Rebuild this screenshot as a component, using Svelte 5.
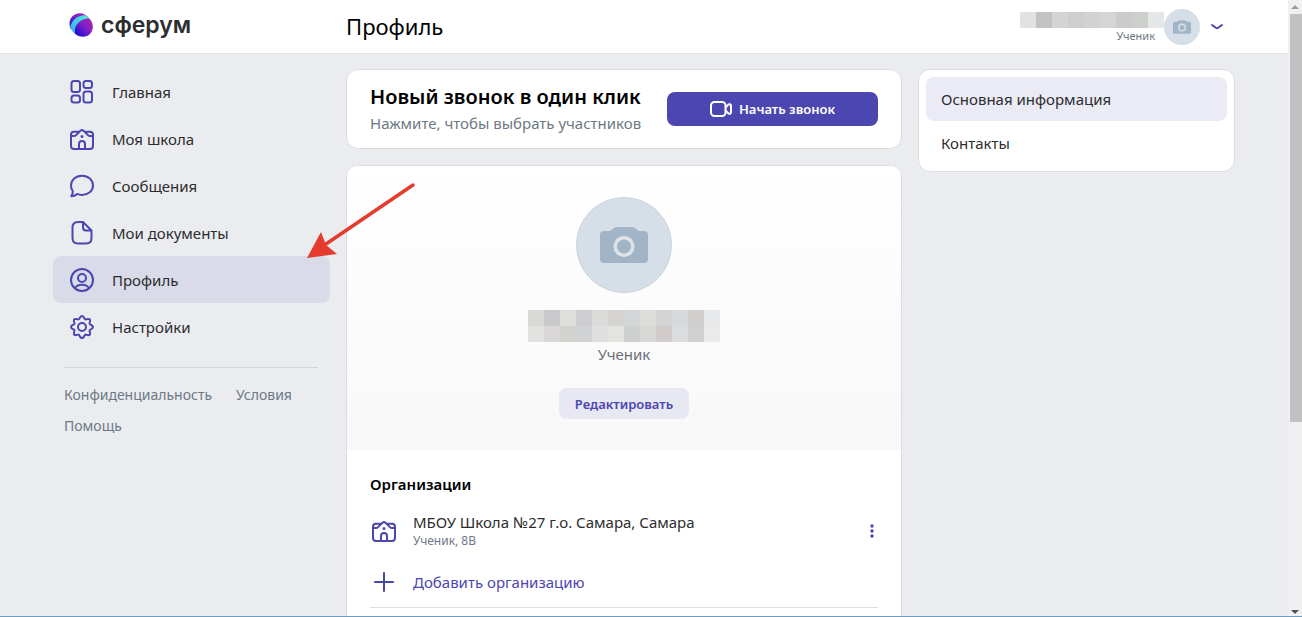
<script lang="ts">
	type IconName = 'home' | 'school' | 'messages' | 'documents' | 'profile' | 'settings';

	interface NavItem {
		icon: IconName;
		label: string;
	}

	const navItems: NavItem[] = [
		{ icon: 'home', label: 'Главная' },
		{ icon: 'school', label: 'Моя школа' },
		{ icon: 'messages', label: 'Сообщения' },
		{ icon: 'documents', label: 'Мои документы' },
		{ icon: 'profile', label: 'Профиль' },
		{ icon: 'settings', label: 'Настройки' }
	];

	const sections = ['Основная информация', 'Контакты'];

	// Hidden names, one colour per 16px tile
	const headerTiles = [
		'#e2e2e2', '#c1c4c2', '#d4d4d4', '#cecdd0', '#d2d2d1', '#d5d5d5', '#cbcbcb', '#cdcfcb', '#e3e7e7'
	];
	const nameTiles = [
		'#d9dad5', '#c9c8cb', '#dededc', '#ceced1', '#dbdbd9', '#d5d4d2',
		'#d3d5d7', '#dcdcda', '#d4d4d4', '#d8d9dc', '#d0cfcd', '#e8e9eb',
		'#e2e2e0', '#d9d7d8', '#d3d3d0', '#d2d3d5', '#dfdfdf', '#e3e3e0',
		'#ced0cf', '#d8d8d6', '#d1cccb', '#dbdcde', '#d1d1d1', '#ebebeb'
	];

	let activeNav = $state('Профиль');
	let activeSection = $state('Основная информация');
</script>

{#snippet icon(name: IconName)}
	<svg class="icon" viewBox="0 0 24 24" aria-hidden="true">
		{#if name === 'home'}
			<rect x="1.5" y="1" width="8.5" height="11" rx="2.5" />
			<rect x="13.5" y="1" width="8.5" height="7" rx="2.5" />
			<rect x="1.5" y="15.5" width="8.5" height="7" rx="2.5" />
			<rect x="13.5" y="11.5" width="8.5" height="11" rx="2.5" />
		{:else if name === 'school'}
			<path
				d="M7.800 4.800H4Q1 4.800 1 7.800V19Q1 22 4 22h16q3 0 3-3V7.800q0-3-3-3h-3.800M1 9h2.800q1.400 0 2.300-.9l4.300-4.300q1.600-1.400 3.200 0l4.300 4.300q.9.9 2.300.9H23M9 21.500V17a3 3 0 0 1 6 0v4.500"
			/>
			<circle class="dot" cx="12" cy="9.500" r="1.500" />
		{:else if name === 'messages'}
			<path
				d="M1.300 22.200c1.100-1.600 1.700-3.200 1.500-5C1.400 15.500 1 13.700 1 11.600 1 6 5.800 1.800 12 1.800S23 6 23 11.600s-4.800 9.300-11 9.300c-1.800 0-3.400-.3-4.800-1-1.700 1.500-3.700 2.300-5.900 2.300z"
			/>
		{:else if name === 'documents'}
			<path d="M13 1H8Q2.500 1 2.500 6.500V17q0 5.500 5.500 5.500h8q5.500 0 5.500-5.500V9.500zv5.500q0 3 3 3h5.500" />
		{:else if name === 'profile'}
			<circle cx="12" cy="12" r="11" />
			<circle cx="12" cy="10" r="4" />
			<path d="M5 20c1.500-2.500 4-3.300 7-3.300s5.500.8 7 3.300" />
		{:else}
			<path
				d="M10 2.500Q12-.5 14 2.500l.8 1.400q.5.800 1.400.5l1.500-.4q2.800-.5 2.300 2.300l-.4 1.500q-.3 1 .5 1.500l1.400.8q3 2 0 3.900l-1.400.8q-.8.500-.5 1.500l.4 1.500q.5 2.800-2.300 2.300l-1.500-.4q-1-.3-1.400.5L14 21.600q-2 3-4 0l-.8-1.500q-.5-.8-1.400-.5l-1.500.4Q3.500 20.500 4 17.700l.4-1.500q.3-1-.5-1.500L2.500 14q-3-2 0-3.900l1.400-.8q.8-.5.5-1.500L4 6.300Q3.500 3.500 6.300 4l1.500.4q1 .3 1.400-.5z"
			/>
			<circle cx="12" cy="12" r="4" />
		{/if}
	</svg>
{/snippet}

{#snippet camera()}
	<svg class="camera" viewBox="0 0 96 96" aria-hidden="true">
		<circle cx="48" cy="48" r="47.500" fill="#d6dfe7" stroke="#c8d3db" />
		<path
			d="M28 34h6l4-3q1.500-1 4-1h13q2.500 0 4 1l4 3h5q4 0 4 4v24q0 4-4 4H28q-4 0-4-4V38q0-4 4-4z"
			fill="#a2b5c6"
		/>
		<circle cx="48" cy="49.500" r="8.800" fill="none" stroke="#dce4ea" stroke-width="3.500" />
	</svg>
{/snippet}

<div class="window">
	<div class="page">
		<header>
			<div class="container header-row">
				<a class="logo" href="#home">
					<svg viewBox="0 0 24 24" aria-hidden="true">
						<defs>
							<linearGradient id="ball" x1="0.200" y1="0.900" x2="0.900" y2="0.200">
								<stop offset="0" stop-color="#2610d0" />
								<stop offset="0.600" stop-color="#8420c8" />
								<stop offset="1" stop-color="#a022b8" />
							</linearGradient>
							<linearGradient id="band" x1="0" y1="1" x2="1" y2="0">
								<stop offset="0" stop-color="#38a8f5" />
								<stop offset="1" stop-color="#4cf0d4" />
							</linearGradient>
						</defs>
						<path d="M1.500 15.500C-1 9 1.500 3 7 1s9.500.5 12 3L5 18z" fill="url(#ball)" />
						<path d="M1.200 14C2.500 7.500 9 1.800 16.800 2.300q2.500 1.400 4 4.200L7 21.500Q2.800 19 1.200 14z" fill="url(#band)" />
						<path
							d="M6 20.500C4.500 12.500 11 5.800 20 5.300q4.200 4 3.800 9.400-1 8.300-9.300 9.100-5 .2-8.500-3.300z"
							fill="url(#ball)"
						/>
					</svg>
					<span>сферум</span>
				</a>
				<h1>Профиль</h1>
				<div class="account">
					<div class="account-text">
						<div class="tiles header-tiles">
							{#each headerTiles as color}
								<i style:background={color}></i>
							{/each}
						</div>
						<span>Ученик</span>
					</div>
					<div class="avatar-small">{@render camera()}</div>
					<button class="chevron" aria-label="Меню профиля">
						<svg viewBox="0 0 14 8" aria-hidden="true"><path d="M2 2l4.200 3q.8.500 1.600 0L12 2" /></svg>
					</button>
				</div>
			</div>
		</header>

		<div class="container columns">
			<div class="side">
				<nav>
					{#each navItems as item}
						<a
							href="#{item.icon}"
							class="nav-item"
							class:active={activeNav === item.label}
							onclick={() => (activeNav = item.label)}
						>
							{@render icon(item.icon)}
							<span>{item.label}</span>
						</a>
					{/each}
				</nav>
				<footer>
					<a href="#privacy">Конфиденциальность</a>
					<a href="#terms">Условия</a>
					<a href="#help">Помощь</a>
				</footer>
			</div>

			<main>
				<section class="card call">
					<div class="call-text">
						<h2>Новый звонок в один клик</h2>
						<p>Нажмите, чтобы выбрать участников</p>
					</div>
					<button class="primary">
						<svg viewBox="0 0 22 16" aria-hidden="true">
							<rect x="1" y="1" width="14.500" height="14" rx="3.500" />
							<path d="M15.500 6.500l3-3q2.500-1 2.500 1.500v6q0 2.500-2.500 1.500l-3-3" />
						</svg>
						Начать звонок
					</button>
				</section>

				<section class="card">
					<div class="person">
						<div class="avatar">{@render camera()}</div>
						<div class="tiles name-tiles">
							{#each nameTiles as color}
								<i style:background={color}></i>
							{/each}
						</div>
						<p>Ученик</p>
						<button class="secondary">Редактировать</button>
					</div>
					<div class="organizations">
						<h3>Организации</h3>
						<div class="organization">
							{@render icon('school')}
							<div class="organization-text">
								<p>МБОУ Школа №27 г.о. Самара, Самара</p>
								<small>Ученик, 8В</small>
							</div>
							<button class="more" aria-label="Действия">
								<svg viewBox="0 0 4 14" aria-hidden="true">
									<circle cx="2" cy="2" r="1.700" />
									<circle cx="2" cy="7" r="1.700" />
									<circle cx="2" cy="12" r="1.700" />
								</svg>
							</button>
						</div>
						<button class="add">
							<svg class="icon" viewBox="0 0 24 24" aria-hidden="true"><path d="M12 3v18M3 12h18" /></svg>
							Добавить организацию
						</button>
					</div>
				</section>
			</main>

			<aside>
				<div class="card sections">
					{#each sections as section}
						<a
							href="#info"
							class:active={activeSection === section}
							onclick={() => (activeSection = section)}>{section}</a
						>
					{/each}
				</div>
			</aside>
		</div>
	</div>

	<div class="scrollbar" aria-hidden="true">
		<svg viewBox="0 0 8 4"><path d="M0 4l4-4 4 4z" fill="#9b9b9b" /></svg>
		<div class="thumb"></div>
		<svg viewBox="0 0 8 4"><path d="M0 0h8L4 4z" fill="#505050" /></svg>
	</div>

	<!-- Pointer drawn over the page, towards the profile item -->
	<svg class="pointer" viewBox="0 0 110 78" aria-hidden="true">
		<path d="M107 3L20 62" stroke="#e53b2f" stroke-width="3.500" stroke-linecap="round" />
		<path d="M1 76L15 50l5 13 11 9z" fill="#e53b2f" />
	</svg>
</div>

<style>
	:global(body) {
		margin: 0;
		background: #ebecf0;
	}

	.window {
		--accent: #4b46b0;
		--line: #dcdddf;
		position: relative;
		box-sizing: border-box;
		display: flex;
		height: 100vh;
		overflow: hidden;
		border-bottom: 1px solid #6f9fc0;
		background: #ebecf0;
		color: #2c2d2e;
		font-family: 'Noto Sans', 'Open Sans', sans-serif;
		font-size: 15px;
		line-height: 20px;
	}

	h1,
	h2,
	h3,
	p {
		margin: 0;
	}

	a {
		color: inherit;
		text-decoration: none;
	}

	button {
		padding: 0;
		border: 0;
		background: none;
		color: var(--accent);
		font: inherit;
		cursor: pointer;
	}

	svg {
		display: block;
	}

	.page {
		flex: 1;
		min-width: 0;
	}

	.container {
		display: grid;
		grid-template-columns: 277px minmax(0, 1fr) 317px;
		column-gap: 16px;
		max-width: 1182px;
		margin: 0 auto;
	}

	/* Header */
	header {
		background: #fff;
		border-bottom: 1px solid #e1e3e6;
	}

	.header-row {
		align-items: center;
		height: 53px;
	}

	.logo {
		display: flex;
		align-items: center;
		gap: 8px;
		padding: 0 0 4px 16px;
		color: #2c2d2e;
		font-family: Inter, sans-serif;
		font-size: 23px;
		font-weight: 600;
		line-height: 28px;
	}

	.logo svg {
		width: 24px;
		height: 24px;
	}

	h1 {
		padding-bottom: 2px;
		color: #000;
		font-size: 22px;
		font-weight: 400;
		line-height: 28px;
	}

	.account {
		display: flex;
		align-items: center;
		justify-content: flex-end;
		padding-right: 11px;
	}

	.account-text {
		display: flex;
		flex-direction: column;
		align-items: flex-end;
		padding-top: 2px;
	}

	.account-text span {
		padding-right: 9px;
		color: #6d7885;
		font-size: 11px;
		line-height: 16px;
	}

	.tiles {
		display: grid;
		grid-auto-rows: 16px;
	}

	.header-tiles {
		grid-template-columns: repeat(9, 16px);
	}

	.name-tiles {
		grid-template-columns: repeat(12, 16px);
	}

	.avatar-small {
		width: 36px;
	}

	.chevron {
		margin-left: 10px;
	}

	.chevron svg {
		width: 14px;
		height: 8px;
		fill: none;
		stroke: var(--accent);
		stroke-width: 2;
		stroke-linecap: round;
	}

	/* Navigation */
	.side {
		padding-top: 14px;
	}

	.nav-item {
		display: flex;
		align-items: center;
		gap: 18px;
		height: 47px;
		padding-left: 17px;
		border-radius: 8px;
	}

	.nav-item.active {
		background: #d9dbe8;
	}

	.icon {
		flex: none;
		width: 24px;
		height: 24px;
		fill: none;
		stroke: var(--accent);
		stroke-width: 2;
		stroke-linecap: round;
		stroke-linejoin: round;
	}

	.icon .dot {
		fill: var(--accent);
		stroke: none;
	}

	footer {
		display: flex;
		flex-wrap: wrap;
		gap: 11px 24px;
		margin: 17px 12px 0 11px;
		padding-top: 17px;
		border-top: 1px solid #d3d5d8;
		color: #6d7885;
		font-size: 14px;
	}

	/* Cards */
	main,
	aside {
		padding-top: 15px;
	}

	.card {
		border: 1px solid var(--line);
		border-radius: 12px;
		background: #fff;
		overflow: hidden;
	}

	.call {
		display: flex;
		align-items: center;
		justify-content: space-between;
		height: 78px;
		margin-bottom: 16px;
		padding: 0 23px;
	}

	h2 {
		color: #000;
		font-size: 20px;
		font-weight: 600;
		line-height: 28px;
	}

	.call-text p {
		color: #6d7885;
		line-height: 24px;
	}

	.primary {
		display: flex;
		align-items: center;
		justify-content: center;
		gap: 7px;
		width: 211px;
		height: 34px;
		border-radius: 8px;
		background: var(--accent);
		color: #fff;
		font-size: 13px;
		font-weight: 600;
	}

	.primary svg {
		width: 22px;
		height: 16px;
		fill: none;
		stroke: #fff;
		stroke-width: 2;
		stroke-linejoin: round;
	}

	.person {
		display: flex;
		flex-direction: column;
		align-items: center;
		padding: 31px 0;
		background: linear-gradient(#fff, #f8f8f8);
	}

	.avatar {
		width: 96px;
		margin-bottom: 17px;
	}

	.person p {
		padding: 2px 0 24px;
		color: #6d7078;
	}

	.secondary {
		width: 130px;
		height: 31px;
		border-radius: 8px;
		background: #e8e8f3;
		font-size: 13px;
		font-weight: 600;
	}

	.organizations {
		margin: 0 23px 40px;
		padding: 24px 0 13px;
		border-bottom: 1px solid var(--line);
	}

	h3 {
		margin-bottom: 18px;
		color: #000;
		font-size: 15px;
		font-weight: 600;
	}

	.organization {
		display: flex;
		align-items: center;
		gap: 17px;
		margin-bottom: 20px;
		padding-left: 2px;
	}

	.organization-text {
		flex: 1;
	}

	.organization small {
		display: block;
		color: #6d7885;
		font-size: 12px;
		line-height: 18px;
	}

	.more {
		padding: 0 4px;
	}

	.more svg {
		width: 4px;
		height: 14px;
		fill: var(--accent);
	}

	.add {
		display: flex;
		align-items: center;
		gap: 17px;
		padding-left: 2px;
	}

	.sections {
		display: flex;
		flex-direction: column;
		padding: 7px 7px 6px;
	}

	.sections a {
		padding: 12px 15px;
		border-radius: 8px;
	}

	.sections a.active {
		background: #ebebf6;
	}

	/* Scrollbar */
	.scrollbar {
		display: flex;
		flex-direction: column;
		align-items: center;
		box-sizing: border-box;
		width: 14px;
		padding: 5px 0 2px;
		background: #f0f0f0;
	}

	.scrollbar svg {
		width: 8px;
		height: 4px;
	}

	.thumb {
		flex: none;
		align-self: flex-end;
		width: 12px;
		height: 67%;
		margin: 5px 0 auto;
		background: #c1c1c1;
	}

	.pointer {
		position: absolute;
		top: 182px;
		left: 306px;
		width: 110px;
		height: 78px;
		fill: none;
		pointer-events: none;
	}
</style>
